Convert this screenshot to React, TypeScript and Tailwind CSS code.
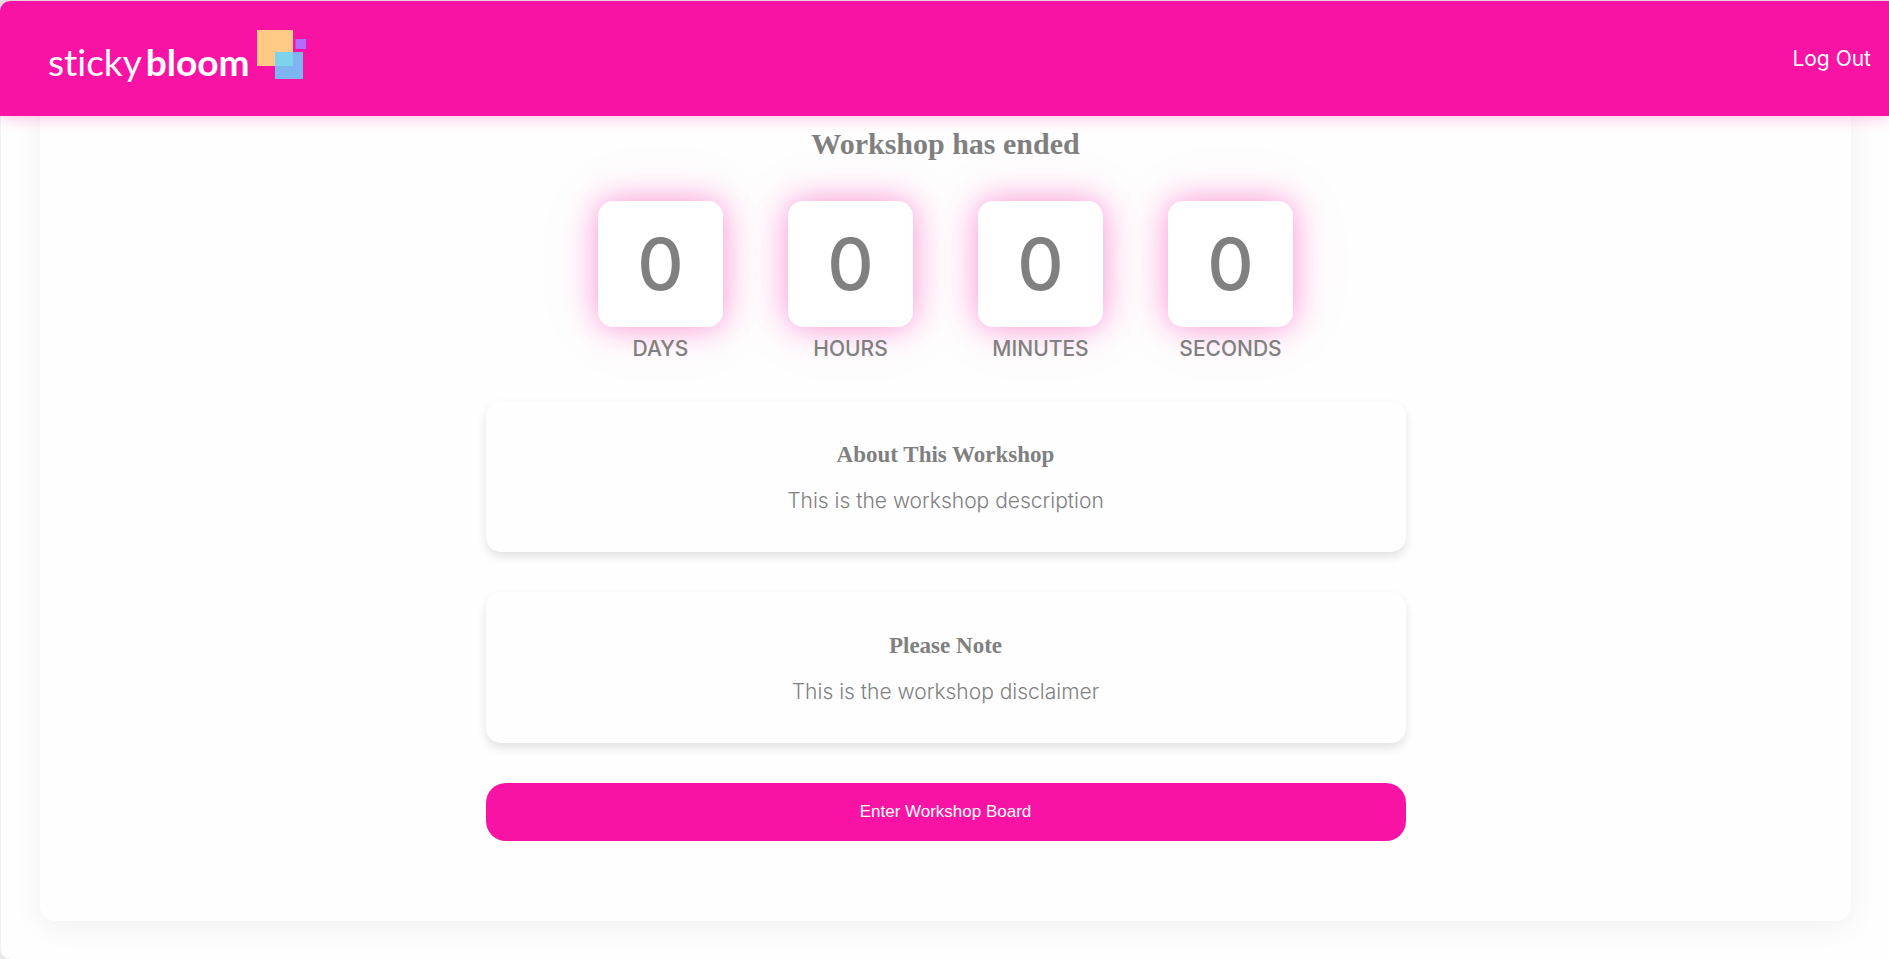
const units = [
  { label: "DAYS", value: 0 },
  { label: "HOURS", value: 0 },
  { label: "MINUTES", value: 0 },
  { label: "SECONDS", value: 0 },
];

function Logo() {
  return (
    <a href="#" aria-label="stickybloom" className="flex items-start text-white">
      <span className="flex gap-1 pt-2.5 font-[Lato,sans-serif] text-[37px] leading-[44px] [font-variant-ligatures:none]">
        <span className="font-normal">sticky</span>
        <span className="font-bold">bloom</span>
      </span>
      <svg width="50" height="50" viewBox="0 0 50 50" className="ml-2" aria-hidden="true">
        <rect x="0" y="0" width="36" height="36" fill="#ffca85" />
        <rect x="18" y="22" width="28" height="27" fill="#7db5f0" />
        <rect x="18" y="22" width="18" height="14" fill="#7dd3ec" />
        <rect x="38.5" y="9" width="10.5" height="10" fill="#b36bfb" />
      </svg>
    </a>
  );
}

function Countdown() {
  return (
    <div className="mt-[39px] flex justify-center gap-[65px]">
      {units.map((unit) => (
        <div key={unit.label} className="flex w-[125px] flex-col items-center">
          <div className="flex h-[126px] w-full items-center justify-center rounded-[15px] bg-white text-[72px] font-medium shadow-[0_0_30px_rgba(249,19,165,0.42),0_0_70px_rgba(249,19,165,0.08)]">
            {unit.value}
          </div>
          <div className="relative mt-2 text-[21px] leading-7 font-medium">{unit.label}</div>
        </div>
      ))}
    </div>
  );
}

function InfoCard({ title, text }: { title: string; text: string }) {
  return (
    <section className="rounded-[15px] px-10 pt-10 pb-9 text-center shadow-[0_5px_10px_rgba(0,0,0,0.11)]">
      <h3 className="font-['Liberation_Serif',serif] text-[23px] leading-7 font-bold">{title}</h3>
      <p className="mt-4 text-[21px] leading-[31px] font-light">{text}</p>
    </section>
  );
}

export default function App() {
  return (
    <div className="min-h-screen bg-[#e8e8e8] pt-px font-[Inter,sans-serif] text-[#808080]">
      <div className="rounded-l-[10px] border-l border-[#f2f2f2] bg-[#fefefe]">
        <header className="relative z-10 -ml-px flex h-[115px] items-start justify-between rounded-tl-[10px] bg-[#f913a5] pr-[18px] pl-12 shadow-[0_2px_15px_rgba(249,19,165,0.25)]">
          <div className="pt-[29px]">
            <Logo />
          </div>
          <a href="#" className="self-center text-[21px] text-white">
            Log Out
          </a>
        </header>
        <main className="-mt-4 pr-[38px] pb-[38px] pl-[39px]">
          <div className="rounded-[15px] bg-[#fefefe] pt-[26px] pb-20 shadow-[0_5px_30px_rgba(0,0,0,0.06)]">
            <h2 className="text-center font-['Liberation_Serif',serif] text-[30px] leading-9 font-bold">
              Workshop has ended
            </h2>
            <Countdown />
            <div className="mx-auto mt-[38px] flex max-w-[920px] flex-col gap-10">
              <InfoCard title="About This Workshop" text="This is the workshop description" />
              <InfoCard title="Please Note" text="This is the workshop disclaimer" />
              <button
                type="button"
                className="h-[58px] rounded-[20px] bg-[#f913a5] font-['Liberation_Sans',sans-serif] text-[17px] text-white"
              >
                Enter Workshop Board
              </button>
            </div>
          </div>
        </main>
      </div>
    </div>
  );
}
